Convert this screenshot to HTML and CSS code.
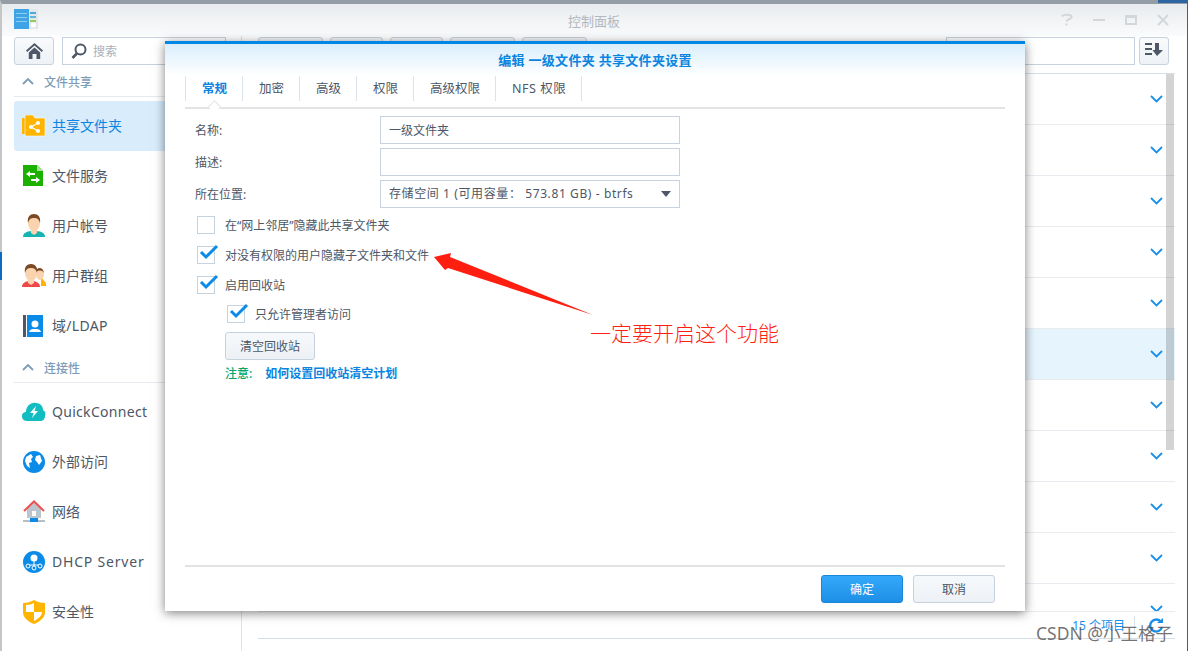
FILE: index.html
```html
<!DOCTYPE html>
<html lang="zh">
  <head>
    <meta charset="UTF-8" />
    <title>控制面板</title>
    <link rel="stylesheet" href="styles.css">
  </head>
  <body>
    <div class="window">
      <header class="titlebar">
        <svg class="app-icon" width="24" height="21" viewBox="0 0 24 21">
          <rect x="0" y="0" width="15" height="20" fill="#3fa4e6" />
          <rect x="2" y="4" width="11" height="1" fill="#8ccdf2" />
          <rect x="2" y="8" width="11" height="1" fill="#8ccdf2" />
          <rect x="2" y="12" width="11" height="1" fill="#8ccdf2" />
          <rect x="15" y="0" width="9" height="20" fill="#e3e7ea" />
          <rect x="16" y="3" width="6" height="2" fill="#49a9d8" />
          <rect x="16" y="7" width="6" height="2" fill="#5fb8d8" />
          <rect x="16" y="11" width="6" height="2" fill="#9ccb5a" />
          <circle cx="19.5" cy="16" r="2.5" fill="#fff" />
        </svg>
        <div class="title">控制面板</div>
        <div class="win-btns">
          <svg width="14" height="14" viewBox="0 0 14 14"><path d="M2 3.5C3 1.5 11 1 11.500 3.500C12 6 7 6 6.500 8.500M6.500 10.500V12.500" fill="none" stroke="#d3d7da" stroke-width="2" /></svg>
          <svg width="14" height="14" viewBox="0 0 14 14"><path d="M1 7H13" stroke="#d3d7da" stroke-width="2" /></svg>
          <svg width="14" height="14" viewBox="0 0 14 14"><path d="M2 3H12V11H2Z" fill="none" stroke="#d3d7da" stroke-width="2" /><path d="M2 4H12" stroke="#d3d7da" stroke-width="2" /></svg>
          <svg width="14" height="14" viewBox="0 0 14 14"><path d="M2 2L12 12M12 2L2 12" stroke="#d3d7da" stroke-width="2" /></svg>
        </div>
      </header>

      <div class="content">
        <aside class="sidebar">
          <div class="side-tools">
            <button class="home-btn">
              <svg width="17" height="16" viewBox="0 0 17 16"><path d="M8.500 0L0 7.500L1.200 9L8.500 2.600L15.800 9L17 7.500Z" fill="#4d5766" /><path d="M2.800 9.500L8.500 4.500L14.200 9.500V16H10.500V11H6.500V16H2.800Z" fill="#4d5766" /></svg>
            </button>
            <div class="side-search">
              <svg width="16" height="17" viewBox="0 0 16 17"><circle cx="9.500" cy="6.500" r="5" fill="none" stroke="#4d5766" stroke-width="2" /><path d="M5.800 10.500L1.500 15" stroke="#4d5766" stroke-width="2.600" /></svg>
              <span>搜索</span>
            </div>
          </div>

          <div class="group-head">
            <svg width="12" height="7" viewBox="0 0 12 7"><path d="M1 6L6 1L11 6" fill="none" stroke="#7d9cb8" stroke-width="1.800" /></svg>
            <span>文件共享</span>
          </div>
          <div class="item active">
            <svg class="item-icon" width="24" height="22" viewBox="0 0 24 22">
              <path d="M0 3H3V19H0Z" fill="#ffb400" />
              <path d="M3 0H11L13 3H23V21H3Z" fill="#ffb400" stroke="#fff" stroke-width="0.600" />
              <path d="M9 12L16 8M9 12L16 16" stroke="#fff" stroke-width="1.400" />
              <circle cx="9" cy="12" r="2" fill="#fff" />
              <circle cx="16" cy="8" r="2" fill="#fff" />
              <circle cx="16" cy="16" r="2" fill="#fff" />
            </svg>
            <span>共享文件夹</span>
          </div>
          <div class="item">
            <svg class="item-icon" width="24" height="22" viewBox="0 0 24 22">
              <path d="M1 0H15L21 6V21H1Z" fill="#1cb000" />
              <path d="M15 0L21 6H15Z" fill="#a6e09a" />
              <path d="M4 9L8 6V8H13V10H8V12ZM18 15L14 12V14H9V16H14V18Z" fill="#fff" />
            </svg>
            <span>文件服务</span>
          </div>
          <div class="item">
            <svg class="item-icon" width="24" height="24" viewBox="0 0 24 24">
              <path d="M1 23C1 18 6 17 12 17C18 17 23 18 23 23Z" fill="#17b3b3" />
              <path d="M9 15H15V19L12 21L9 19Z" fill="#fbd3ae" />
              <ellipse cx="12" cy="9" rx="6" ry="8" fill="#fbd3ae" />
              <path d="M6 9C5 3 8 0 12 0C16 0 19 3 18 9C17 5 15 4 12 4C9 4 7 5 6 9Z" fill="#7b4a24" />
            </svg>
            <span>用户帐号</span>
          </div>
          <div class="item">
            <svg class="item-icon" width="24" height="24" viewBox="0 0 24 24">
              <path d="M19 22V13L24 19V22Z" fill="#ffb400" />
              <ellipse cx="18" cy="10" rx="4" ry="6" fill="#fbd3ae" />
              <path d="M14 8C14 3 21 2 22 9C20 6 17 6 14 8Z" fill="#7b4a24" />
              <path d="M0 23C0 18 5 17 9 17C13 17 18 18 18 23Z" fill="#f04848" />
              <path d="M6 15H12V19L9 21L6 19Z" fill="#fbd3ae" />
              <ellipse cx="9" cy="9" rx="6" ry="8" fill="#fbd3ae" />
              <path d="M3 9C2 3 5 0 9 0C13 0 16 3 15 9C14 5 12 4 9 4C6 4 4 5 3 9Z" fill="#7b4a24" />
            </svg>
            <span>用户群组</span>
          </div>
          <div class="item">
            <svg class="item-icon" width="24" height="22" viewBox="0 0 24 22">
              <rect x="1" y="0" width="3" height="22" fill="#4d5766" />
              <rect x="5" y="0" width="16" height="22" fill="#0a8be8" />
              <circle cx="13" cy="9" r="3.500" fill="#fff" />
              <path d="M7 17C8 14 10 14 13 14C16 14 18 14 19 17Z" fill="#fff" />
            </svg>
            <span class="latin">域/LDAP</span>
          </div>

          <div class="group-head">
            <svg width="12" height="7" viewBox="0 0 12 7"><path d="M1 6L6 1L11 6" fill="none" stroke="#7d9cb8" stroke-width="1.800" /></svg>
            <span>连接性</span>
          </div>
          <div class="item">
            <svg class="item-icon" width="24" height="20" viewBox="0 0 24 20">
              <path d="M5 19C1 19 0 16 0 14C0 11 2 10 4 10C4 4 9 0 14 1C18 1 21 4 21 8C23 9 24 11 23 14C23 17 21 19 18 19Z" fill="#12bdc2" />
              <path d="M14 4L8 11H11.500L10 16L16 9H12.500Z" fill="#fff" />
            </svg>
            <span class="latin">QuickConnect</span>
          </div>
          <div class="item">
            <svg class="item-icon" width="24" height="24" viewBox="0 0 24 24">
              <circle cx="12" cy="12" r="11" fill="#0a8be8" />
              <path d="M4 7L9 4L11 7L9 9L10 12L7 13L8 18L5 16L3 11ZM14 6L18 5L20 11L17 15L15 12L13 10Z" fill="#fff" />
            </svg>
            <span>外部访问</span>
          </div>
          <div class="item">
            <svg class="item-icon" width="24" height="24" viewBox="0 0 24 24">
              <path d="M5 9L12 3L19 9V18H5Z" fill="#bcc4cc" />
              <rect x="10" y="11" width="4" height="5" fill="#fff" />
              <path d="M2 11L12 1.500L22 11" fill="none" stroke="#f04e50" stroke-width="2" />
              <rect x="1" y="20" width="22" height="2" fill="#b5bec6" />
              <rect x="8" y="18" width="8" height="4" fill="#0a8be8" />
            </svg>
            <span>网络</span>
          </div>
          <div class="item">
            <svg class="item-icon" width="24" height="24" viewBox="0 0 24 24">
              <circle cx="12" cy="12" r="11" fill="#0a8be8" />
              <circle cx="12" cy="8" r="3.500" fill="#fff" />
              <path d="M12 11V17M5 15H19" stroke="#fff" stroke-width="1" />
              <circle cx="6" cy="16" r="2" fill="#0a8be8" stroke="#fff" />
              <circle cx="12" cy="18" r="2" fill="#0a8be8" stroke="#fff" />
              <circle cx="18" cy="16" r="2" fill="#0a8be8" stroke="#fff" />
            </svg>
            <span class="latin wide">DHCP Server</span>
          </div>
          <div class="item">
            <svg class="item-icon" width="24" height="24" viewBox="0 0 24 24">
              <path d="M1 3C5 3 9 2 12 0C15 2 19 3 23 3V12C23 18 17 22 12 24C7 22 1 18 1 12Z" fill="#ffb400" />
              <path d="M12 3V12H4V5C7 5 10 4 12 3ZM12 12H20C20 16 16 19 12 21Z" fill="#fff" />
            </svg>
            <span>安全性</span>
          </div>
        </aside>

        <main class="main">
          <div class="main-tools">
            <div class="tool-btns">
              <span class="tool-btn wide"></span>
              <span class="tool-btn"></span>
              <span class="tool-btn"></span>
              <span class="tool-btn wide"></span>
              <span class="tool-btn wide"></span>
            </div>
            <div class="main-search"></div>
            <button class="sort-btn">
              <svg width="18" height="13" viewBox="0 0 18 13"><path d="M0 1H7M0 6H7M0 11H7" stroke="#4d5766" stroke-width="2" /><path d="M10 0H14V7H18L12 13L7.500 7H10Z" fill="#4d5766" /></svg>
            </button>
          </div>
          <div class="list-wrap">
            <div class="rows">
              <div class="row"><svg width="13" height="8" viewBox="0 0 13 8"><path d="M1 1L6.500 6.500L12 1" /></svg></div>
              <div class="row"><svg width="13" height="8" viewBox="0 0 13 8"><path d="M1 1L6.500 6.500L12 1" /></svg></div>
              <div class="row"><svg width="13" height="8" viewBox="0 0 13 8"><path d="M1 1L6.500 6.500L12 1" /></svg></div>
              <div class="row"><svg width="13" height="8" viewBox="0 0 13 8"><path d="M1 1L6.500 6.500L12 1" /></svg></div>
              <div class="row"><svg width="13" height="8" viewBox="0 0 13 8"><path d="M1 1L6.500 6.500L12 1" /></svg></div>
              <div class="row selected"><svg width="13" height="8" viewBox="0 0 13 8"><path d="M1 1L6.500 6.500L12 1" /></svg></div>
              <div class="row"><svg width="13" height="8" viewBox="0 0 13 8"><path d="M1 1L6.500 6.500L12 1" /></svg></div>
              <div class="row"><svg width="13" height="8" viewBox="0 0 13 8"><path d="M1 1L6.500 6.500L12 1" /></svg></div>
              <div class="row"><svg width="13" height="8" viewBox="0 0 13 8"><path d="M1 1L6.500 6.500L12 1" /></svg></div>
              <div class="row"><svg width="13" height="8" viewBox="0 0 13 8"><path d="M1 1L6.500 6.500L12 1" /></svg></div>
              <div class="row"><svg width="13" height="8" viewBox="0 0 13 8"><path d="M1 1L6.500 6.500L12 1" /></svg></div>
            </div>
            <div class="scrollbar"></div>
          </div>
          <div class="status">
            <span class="count">15 个项目</span>
            <svg width="16" height="15" viewBox="0 0 16 15"><path d="M13 4A6 6 0 1 0 14 9" fill="none" stroke="#1a8fe8" stroke-width="2.400" /><path d="M9 5H15V0Z" fill="#1a8fe8" /></svg>
          </div>
        </main>
      </div>
    </div>

    <section class="dialog">
      <h2 class="dialog-title">编辑 一级文件夹 共享文件夹设置</h2>
      <nav class="tabs">
        <span class="tab current">常规</span>
        <span class="tab">加密</span>
        <span class="tab">高级</span>
        <span class="tab">权限</span>
        <span class="tab">高级权限</span>
        <span class="tab">NFS 权限</span>
      </nav>
      <div class="dialog-body">
        <div class="field"><label>名称:</label><div class="input">一级文件夹</div></div>
        <div class="field"><label>描述:</label><div class="input"></div></div>
        <div class="field">
          <label>所在位置:</label>
          <div class="input select"><span>存储空间 1 (可用容量： 573.81 GB) - btrfs</span><i class="caret"></i></div>
        </div>
        <div class="check first"><i class="box"></i><span>在“网上邻居”隐藏此共享文件夹</span></div>
        <div class="check"><i class="box on"><svg width="21" height="17" viewBox="0 0 21 17"><path d="M3 8L8 13L19 2" /></svg></i><span>对没有权限的用户隐藏子文件夹和文件</span></div>
        <div class="check"><i class="box on"><svg width="21" height="17" viewBox="0 0 21 17"><path d="M3 8L8 13L19 2" /></svg></i><span>启用回收站</span></div>
        <div class="check sub"><i class="box on"><svg width="21" height="17" viewBox="0 0 21 17"><path d="M3 8L8 13L19 2" /></svg></i><span>只允许管理者访问</span></div>
        <button class="btn empty-btn">清空回收站</button>
        <p class="note"><span class="note-label">注意:</span><a class="note-link">如何设置回收站清空计划</a></p>
      </div>
      <footer class="dialog-foot">
        <button class="btn primary">确定</button>
        <button class="btn">取消</button>
      </footer>
    </section>

    <svg class="arrow" width="170" height="70" viewBox="0 0 170 70">
      <path d="M1 4L18 0L17 4L160 62L15 15L12 17Z" fill="#fe1f10" />
    </svg>
    <div class="annotation">一定要开启这个功能</div>
    <div class="watermark">CSDN @小王格子</div>
  </body>
</html>
```

FILE: styles.css
```css
html,
body {
  height: 100%;
}
body {
  margin: 0;
  overflow: hidden;
  background: #fff;
  font-family: "Noto Sans", "Noto Sans CJK SC", sans-serif;
  font-size: 13px;
  color: #4d5766;
}
.window {
  height: 647px;
  border-top: 4px solid #949ca5;
  border-left: 2px solid #c4c6c8;
  border-right: 1px solid #2b66a0;
  display: flex;
  flex-direction: column;
  overflow: hidden;
}
/* bits of the desktop showing round the window */
.window::before {
  content: "";
  position: absolute;
  top: 0;
  right: 0;
  width: 30px;
  height: 3px;
  background: #2b66a0;
}
.window::after {
  content: "";
  position: absolute;
  top: 252px;
  left: 0;
  width: 2px;
  height: 28px;
  background: #0a6bc0;
}
.titlebar {
  flex: none;
  height: 32px;
  display: flex;
  align-items: center;
  padding: 0 17px 0 12px;
  background: linear-gradient(#e8ebee, #fafbfc);
}
.app-icon {
  flex: none;
  margin-top: -1px;
}
.title {
  flex: 1;
  text-align: center;
  color: #b2b8be;
  font-size: 13px;
  padding-left: 90px;
}
.win-btns {
  display: flex;
  gap: 18px;
}
.content {
  flex: 1;
  display: flex;
  min-height: 0;
}
.sidebar {
  flex: none;
  width: 240px;
  box-sizing: border-box;
  padding: 1px 0 0 12px;
  border-right: 1px solid #dde3ea;
  overflow: hidden;
}
.side-tools {
  display: flex;
  gap: 8px;
  height: 28px;
}
.home-btn {
  width: 40px;
  height: 28px;
  padding: 0;
  border: 1px solid #c6d2de;
  border-radius: 3px;
  background: linear-gradient(#f8fafc, #eef2f6);
  display: flex;
  align-items: center;
  justify-content: center;
}
.side-search {
  flex: 1;
  border: 1px solid #c6d2de;
  display: flex;
  align-items: center;
  gap: 6px;
  padding-left: 8px;
  margin-right: 15px;
  color: #a9b1b9;
  font-size: 12px;
}
.group-head {
  height: 29px;
  padding: 2px 1px 0 8px;
  border-bottom: 1px solid #e6eaef;
  display: flex;
  align-items: center;
  gap: 10px;
  color: #7d9cb8;
  font-size: 12px;
  font-weight: 500;
}
.item {
  height: 50px;
  display: flex;
  align-items: center;
  padding-left: 8px;
  font-size: 14px;
}
.item span {
  margin-top: -2px;
}
.item .latin {
  letter-spacing: 0.3px;
}
.item .wide {
  letter-spacing: 0.8px;
}
.group-head + .item {
  margin-top: 4px;
}
.item.active {
  background: #d8ecfc;
  border-radius: 3px;
  color: #0a84e0;
  margin-right: -1px;
}
.item-icon {
  flex: none;
  width: 24px;
  margin-right: 6px;
}
.main {
  flex: 1;
  min-width: 0;
  display: flex;
  flex-direction: column;
  padding: 0 0 12px 16px;
}
.main-tools {
  flex: none;
  height: 28px;
  margin-top: 1px;
  display: flex;
  padding-right: 18px;
}
.tool-btns {
  display: flex;
  gap: 7px;
}
.tool-btn {
  display: block;
  width: 53px;
  height: 28px;
  box-sizing: border-box;
  border: 1px solid #c6d2de;
  border-radius: 3px;
  background: #f3f5f8;
}
.tool-btn.wide {
  width: 65px;
}
.main-search {
  margin-left: auto;
  width: 189px;
  height: 28px;
  box-sizing: border-box;
  border: 1px solid #c6d2de;
  background: #fff;
}
.sort-btn {
  width: 30px;
  height: 28px;
  margin-left: 4px;
  padding: 0;
  border: 1px solid #c6d2de;
  border-radius: 3px;
  background: linear-gradient(#f8fafc, #eef2f6);
}
.list-wrap {
  flex: 1;
  min-height: 0;
  margin-top: 8px;
  margin-right: 12px;
  border-top: 1px solid #d8e0e7;
  border-bottom: 1px solid #e8ecf0;
  position: relative;
  overflow: hidden;
}
.row {
  height: 50px;
  padding-right: 12px;
  border-bottom: 1px solid #e8ecf0;
  display: flex;
  align-items: center;
  justify-content: flex-end;
}
.row.selected {
  background: #e6f4fe;
}
.row svg path {
  fill: none;
  stroke: #1a8fe8;
  stroke-width: 1.800;
}
.scrollbar {
  position: absolute;
  top: 0;
  right: 1px;
  width: 8px;
  height: 376px;
  background: rgba(0, 0, 0, 0.17);
}
.status {
  flex: none;
  height: 26px;
  margin-right: 12px;
  border-bottom: 1px solid #d6dfe8;
  display: flex;
  align-items: center;
  justify-content: flex-end;
  padding-right: 11px;
  color: #1a8fe8;
  font-size: 12px;
}
.count {
  padding-right: 9px;
  margin-right: 13px;
  border-right: 1px solid #dde3ea;
  line-height: 19px;
}
.dialog {
  position: absolute;
  left: 165px;
  top: 41px;
  width: 860px;
  height: 570px;
  box-sizing: border-box;
  border-top: 3px solid #0086e5;
  background: #fff linear-gradient(#d9eefb, #fff 32px) no-repeat;
  box-shadow: 0 2px 10px rgba(0, 0, 0, 0.5);
  display: flex;
  flex-direction: column;
}
.dialog-title {
  margin: 0;
  height: 30px;
  line-height: 32px;
  text-align: center;
  font-size: 13px;
  font-weight: 700;
  letter-spacing: 0.3px;
  color: #0a84e0;
}
.tabs {
  flex: none;
  height: 35px;
  margin: 0 20px;
  box-sizing: border-box;
  padding: 2px 0 6px;
  border-bottom: 2px solid #e2e3e5;
  display: flex;
}
.tab {
  padding: 0 15px 0 16px;
  border-right: 1px solid #dde3ea;
  font-size: 12.5px;
  line-height: 25px;
}
.tab:last-child {
  letter-spacing: 0.5px;
}
.tab.current {
  border-left: 1px solid #dde3ea;
  color: #0a84e0;
  font-weight: 700;
  position: relative;
}
.tab.current::after {
  content: "";
  position: absolute;
  left: 24px;
  bottom: -10px;
  width: 8px;
  height: 8px;
  background: #fff;
  border-left: 1px solid #dfe2e5;
  border-top: 1px solid #dfe2e5;
  transform: rotate(45deg);
}
.dialog-body {
  flex: 1;
  margin: 0 20px;
  padding: 7px 0 0 10px;
  border-bottom: 2px solid #e2e3e5;
}
.field {
  height: 28px;
  margin-bottom: 4px;
  display: flex;
  align-items: center;
  font-size: 12px;
}
.field label {
  width: 185px;
  flex: none;
}
.input {
  width: 300px;
  height: 28px;
  box-sizing: border-box;
  border: 1px solid #c6d2de;
  padding-left: 8px;
  line-height: 28px;
  font-size: 12px;
}
.select {
  display: flex;
  align-items: center;
  justify-content: space-between;
  padding-right: 8px;
  letter-spacing: 0.6px;
}
.caret {
  width: 0;
  height: 0;
  border-left: 5px solid transparent;
  border-right: 5px solid transparent;
  border-top: 6px solid #4d5766;
}
.check {
  height: 30px;
  display: flex;
  align-items: center;
  gap: 10px;
  margin-left: 2px;
  font-size: 12px;
}
.check.first {
  margin-top: -2px;
}
.check.sub {
  margin: -1px 0 0 32px;
}
.box {
  flex: none;
  width: 18px;
  height: 18px;
  box-sizing: border-box;
  border: 1px solid #c6d2de;
  position: relative;
}
.box svg {
  position: absolute;
  left: 0;
  top: -3px;
}
.box path {
  fill: none;
  stroke: #0a8be8;
  stroke-width: 3;
}
.btn {
  width: 82px;
  height: 28px;
  padding: 0;
  border: 1px solid #c6d2de;
  border-radius: 3px;
  background: linear-gradient(#f6f9fc, #edf1f5);
  color: #4d5766;
  font-family: inherit;
  font-size: 12px;
}
.empty-btn {
  display: block;
  width: 90px;
  margin: 3px 0 0 30px;
}
.note {
  margin: 5px 0 0 30px;
  font-size: 12px;
  line-height: 17px;
  font-weight: 500;
}
.note-label {
  color: #00a870;
  margin-right: 13px;
}
.note-link {
  color: #0a84e0;
  font-weight: 700;
}
.dialog-foot {
  flex: none;
  height: 44px;
  padding: 0 30px 0 0;
  display: flex;
  align-items: center;
  justify-content: flex-end;
  gap: 10px;
}
.btn.primary {
  border-color: #1a86d8;
  background: linear-gradient(#34a9fb, #1e8fe6);
  color: #fff;
}
.arrow {
  position: absolute;
  left: 433px;
  top: 253px;
}
.annotation {
  position: absolute;
  left: 590px;
  top: 318px;
  color: #fe1f10;
  font-size: 21px;
  line-height: 29px;
  font-family: "Noto Sans CJK SC", sans-serif;
  font-weight: 300;
}
.watermark {
  position: absolute;
  right: 15px;
  bottom: 8px;
  color: rgba(70, 70, 70, 0.75);
  font-size: 17.5px;
  line-height: 20px;
  font-family: "Noto Sans", "Noto Sans CJK SC", sans-serif;
}
```
